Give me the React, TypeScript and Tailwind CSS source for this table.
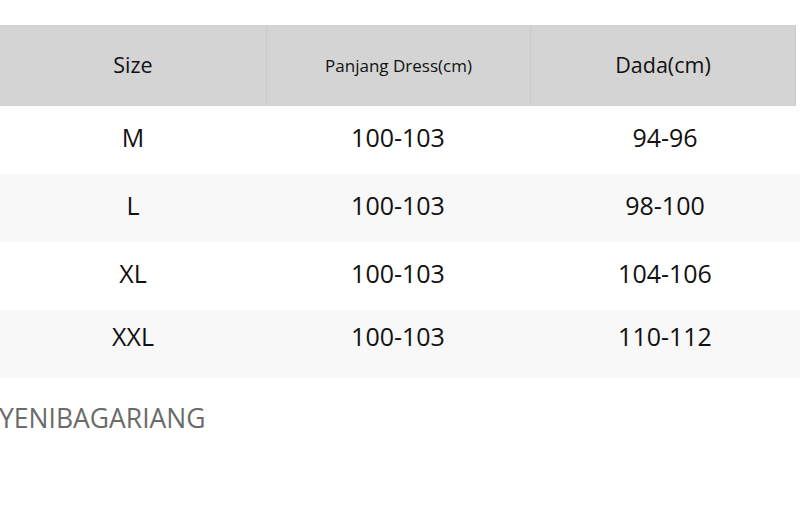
import React from 'react';

const rows = [
  { size: 'M', panjang: '100-103', dada: '94-96' },
  { size: 'L', panjang: '100-103', dada: '98-100' },
  { size: 'XL', panjang: '100-103', dada: '104-106' },
  { size: 'XXL', panjang: '100-103', dada: '110-112' },
];

export default function App() {
  return (
    <div className="w-[800px] h-[512px] bg-white overflow-hidden" style={{ fontFamily: '"Open Sans", "Noto Sans", sans-serif' }}>
      <div className="pt-[25px]">
        {/* header */}
        <div className="grid grid-cols-[266px_264px_266px_4px] h-[81px] bg-[#d4d4d4] text-[#111]">
          <div className="flex items-center justify-center text-[21.5px]">Size</div>
          <div className="flex items-center justify-center text-[17px] border-l border-[#cbcbcb]">Panjang Dress(cm)</div>
          <div className="flex items-center justify-center text-[21.5px] border-l border-[#cbcbcb] border-r">Dada(cm)</div>
          <div className="bg-white" />
        </div>

        {/* rows */}
        {rows.map((r, i) => (
          <div
            key={r.size}
            className={`grid grid-cols-[266px_264px_270px] text-[25px] text-[#111] ${i % 2 === 1 ? 'bg-[#f8f8f8]' : 'bg-white'} ${i === rows.length - 1 ? 'h-[68px] pb-[15px]' : 'h-[68px] pb-[4px]'}`}
          >
            <div className="flex items-center justify-center">{r.size}</div>
            <div className="flex items-center justify-center">{r.panjang}</div>
            <div className="flex items-center justify-center">{r.dada}</div>
          </div>
        ))}
      </div>

      <div className="mt-[27px] -ml-[1px] text-[26.5px] text-[#6b6b6b] leading-none">YENIBAGARIANG</div>
    </div>
  );
}
